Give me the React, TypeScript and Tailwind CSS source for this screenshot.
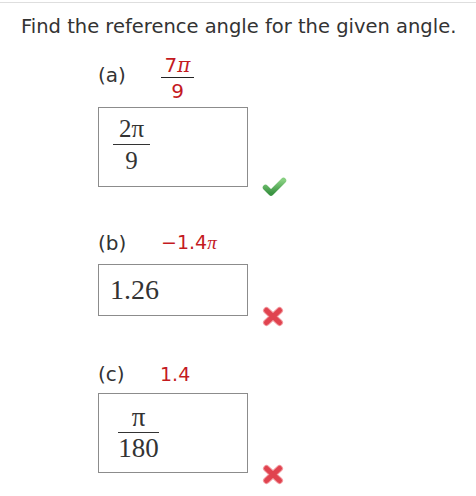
import React from 'react'

const SANS = { fontFamily: '"DejaVu Sans", Verdana, sans-serif' }
const SERIF = { fontFamily: '"Liberation Serif", "Times New Roman", "DejaVu Serif", serif' }

function Check() {
  return (
    <svg width="25" height="20" viewBox="0 0 25 20">
      <defs>
        <linearGradient id="g" x1="0" y1="0" x2="0" y2="1">
          <stop offset="0" stopColor="#86cf80" />
          <stop offset="1" stopColor="#3b9443" />
        </linearGradient>
      </defs>
      <path d="M3.5 10.5 L9 16 L21.5 3.5" fill="none" stroke="url(#g)" strokeWidth="5.5" strokeLinecap="round" strokeLinejoin="round" />
    </svg>
  )
}

function Cross() {
  return (
    <svg width="22" height="21" viewBox="0 0 22 21">
      <g stroke="#f29aa0" strokeWidth="7" strokeLinecap="round">
        <path d="M4.5 4.5 L17.5 16.5" />
        <path d="M17.5 4.5 L4.5 16.5" />
      </g>
      <g stroke="#e0434f" strokeWidth="5" strokeLinecap="round">
        <path d="M4.5 4.5 L17.5 16.5" />
        <path d="M17.5 4.5 L4.5 16.5" />
      </g>
    </svg>
  )
}

function Box({ h, children, pl }: { h: string; children: React.ReactNode; pl: string }) {
  return (
    <div className={`flex items-center w-[150px] border border-[#8c8c8c] ${h} ${pl} text-[#333]`} style={SERIF}>
      {children}
    </div>
  )
}

export default function App() {
  return (
    <div className="w-[476px] h-[496px] bg-white text-[#333] overflow-hidden" style={SANS}>
      <div className="mt-[2px] h-px bg-[#dedede]" />
      <div className="pl-[21px] pt-[12px] text-[19.5px] leading-[24px]">Find the reference angle for the given angle.</div>

      <div className="pl-[98px]">
        {/* (a) */}
        <div className="flex items-start mt-[15px]">
          <span className="w-[63px] text-[20px] leading-[24px] mt-[9px]">(a)</span>
          <div className="flex flex-col items-center text-[#c41a1f] text-[20px] leading-[22px]">
            <span>
              7<span className="italic" style={{ fontFamily: '"DejaVu Serif", serif' }}>π</span>
            </span>
            <span className="h-px w-[33px] bg-[#222] mt-[1px]" />
            <span className="mt-[2px]">9</span>
          </div>
        </div>
        <div className="flex items-end mt-[5px]">
          <Box h="h-[80px]" pl="pl-[14px]">
            <div className="flex flex-col items-center text-[25px] leading-[26px] pb-[4px]">
              <span>2π</span>
              <span className="h-px w-[37px] bg-[#333] mt-[2px] mb-[3px]" />
              <span>9</span>
            </div>
          </Box>
          <div className="ml-[14px] mb-[-10px]">
            <Check />
          </div>
        </div>

        {/* (b) */}
        <div className="flex items-center h-[24px] mt-[44px]">
          <span className="w-[63px] text-[20px]">(b)</span>
          <span className="text-[#c41a1f] text-[19px]">
            −1.4<span className="italic" style={SERIF}>π</span>
          </span>
        </div>
        <div className="flex items-end mt-[9px]">
          <Box h="h-[52px]" pl="pl-[11px]">
            <span className="text-[28px]">1.26</span>
          </Box>
          <div className="ml-[14px] mb-[-11px]">
            <Cross />
          </div>
        </div>

        {/* (c) */}
        <div className="flex items-center h-[24px] mt-[46px]">
          <span className="w-[62px] text-[20px]">(c)</span>
          <span className="text-[#c41a1f] text-[19px]">1.4</span>
        </div>
        <div className="flex items-end mt-[7px]">
          <Box h="h-[80px]" pl="pl-[19px]">
            <div className="flex flex-col items-center text-[27px] leading-[27px]">
              <span>π</span>
              <span className="h-px w-[41px] bg-[#333] mt-[1px] mb-[2px]" />
              <span>180</span>
            </div>
          </Box>
          <div className="ml-[14px] mb-[-12px]">
            <Cross />
          </div>
        </div>
      </div>
    </div>
  )
}
